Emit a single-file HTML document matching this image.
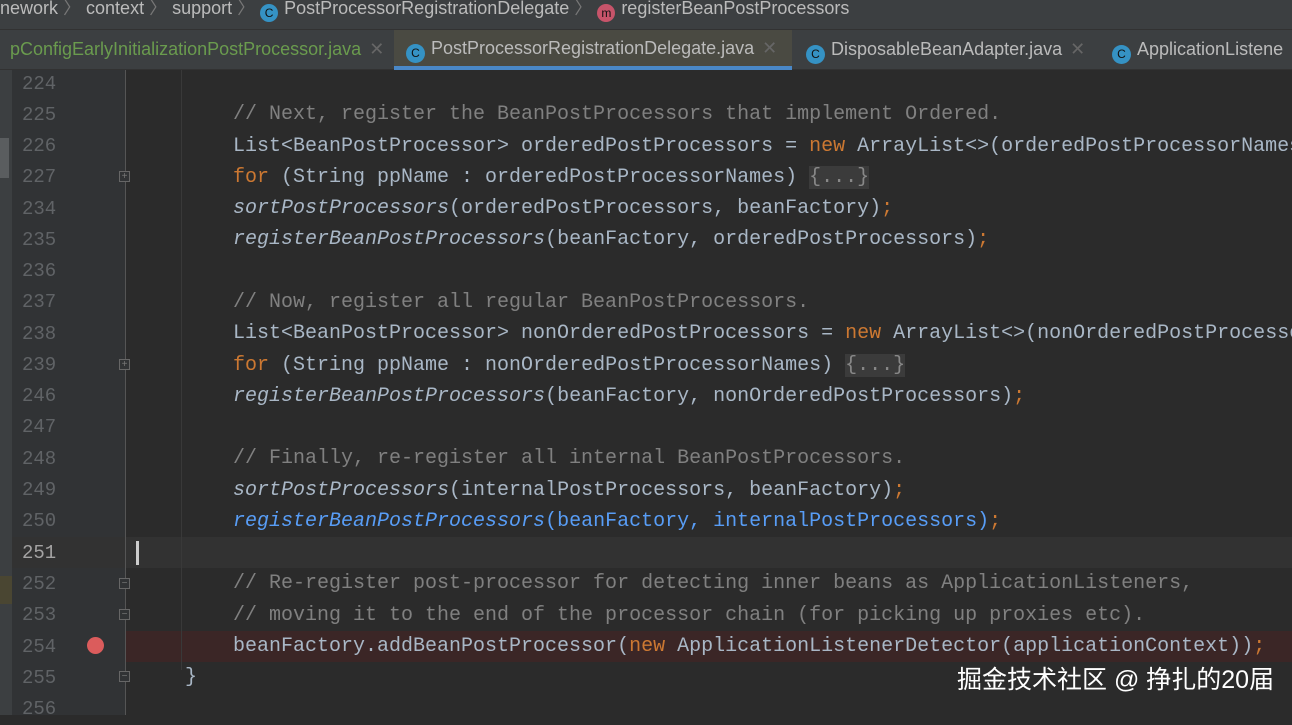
<!DOCTYPE html><html><head><meta charset="utf-8"><style>
body{margin:0;width:1292px;height:715px;overflow:hidden;background:#2b2b2b;font-family:"Liberation Sans",sans-serif;position:relative}
.bc{position:absolute;left:0;top:0;width:1292px;height:29px;background:#3c3f41;color:#bbb;font-size:18px;line-height:16px;white-space:nowrap}
.tabs{position:absolute;left:0;top:29px;width:1292px;height:41px;background:#3c3f41;border-top:1px solid #323232;border-bottom:1px solid #323232;box-sizing:border-box;font-size:18px;white-space:nowrap}
.tab{position:absolute;top:0;height:40px;line-height:38px;color:#bbb}
.ic{display:inline-block;width:19px;height:19px;border-radius:50%;background:#3592c4;color:#111;font-size:12px;line-height:19px;text-align:center;vertical-align:-3px;margin-right:6px}
.x{color:#666;margin-left:8px}
.strip{position:absolute;left:0;top:70px;width:12px;height:645px;background:#3c3f41}
.gut{position:absolute;left:12px;top:70px;width:113px;height:645px;background:#313335}
.fl{position:absolute;left:125px;top:70px;width:1px;height:645px;background:#555}
.ln{position:absolute;left:22px;width:40px;color:#606366;font:19px/31px "Liberation Mono",monospace;margin-top:2px}
.c{position:absolute;left:233px;color:#a9b7c6;font:20px/31px "Liberation Mono",monospace;white-space:pre;margin-top:2px}
.cm{color:#808080}.k{color:#cc7832}.i{font-style:italic}.b{color:#589df6}
.fold{position:absolute;left:119px;width:11px;height:11px;border:1px solid #666;box-sizing:border-box;background:#313335;color:#777;font-size:10px;line-height:9px;text-align:center}
.gd{position:absolute;left:181px;top:70px;width:1px;height:600px;background:#393939}
</style></head><body>
<div class="bc"><div style="position:absolute;top:0;left:0">nework <span style="color:#777">〉</span> context <span style="color:#777">〉</span> support <span style="color:#777">〉</span> <span class="ic" style="width:18px;height:18px">C</span>PostProcessorRegistrationDelegate <span style="color:#777">〉</span> <span class="ic" style="background:#c7546a;width:18px;height:18px">m</span>registerBeanPostProcessors</div></div>
<div class="tabs">
<div class="tab" style="left:0;width:392px;color:#6a9b4e;padding-left:10px;box-sizing:border-box">pConfigEarlyInitializationPostProcessor.java<span class="x">✕</span></div>
<div class="tab" style="left:394px;width:398px;background:#4a4a42;border-bottom:4px solid #4a88c7;box-sizing:border-box;padding-left:12px;line-height:36px"><span class="ic">C</span>PostProcessorRegistrationDelegate.java<span class="x">✕</span></div>
<div class="tab" style="left:806px"><span class="ic">C</span>DisposableBeanAdapter.java<span class="x">✕</span></div>
<div class="tab" style="left:1112px"><span class="ic">C</span>ApplicationListene</div>
</div>
<div class="strip"></div><div style="position:absolute;left:0;top:138px;width:9px;height:40px;background:#5a5d5f"></div>
<div style="position:absolute;left:0;top:576px;width:12px;height:28px;background:#4a4632"></div>
<div class="gut"></div>
<div style="position:absolute;left:12px;top:537px;width:1280px;height:31px;background:#323232"></div>
<div style="position:absolute;left:126px;top:631px;width:1166px;height:31px;background:#3b2626"></div>
<div class="fl"></div><div class="gd"></div>
<div style="position:absolute;left:136px;top:541px;width:3px;height:24px;background:#ccc"></div>
<div style="position:absolute;left:87px;top:637px;width:17px;height:17px;border-radius:50%;background:#db5c5c"></div>
<div class="fold" style="top:171px">+</div><div class="fold" style="top:359px">+</div>
<div class="fold" style="top:578px">−</div><div class="fold" style="top:609px">−</div><div class="fold" style="top:671px">−</div>

<div class="ln" style="top:67px">224</div>
<div class="ln" style="top:98px">225</div><div class="c" style="top:97px"><span class="cm">// Next, register the BeanPostProcessors that implement Ordered.</span></div>
<div class="ln" style="top:129px">226</div><div class="c" style="top:129px">List&lt;BeanPostProcessor&gt; orderedPostProcessors = <span class="k">new</span> ArrayList&lt;&gt;(orderedPostProcessorNames</div>
<div class="ln" style="top:160px">227</div><div class="c" style="top:160px"><span class="k">for</span> (String ppName : orderedPostProcessorNames) <span style="background:#3b3b3b;color:#888">{...}</span></div>
<div class="ln" style="top:192px">234</div><div class="c i" style="top:191px">sortPostProcessors<span style="font-style:normal">(orderedPostProcessors, beanFactory)<span class="k">;</span></span></div>
<div class="ln" style="top:223px">235</div><div class="c i" style="top:222px">registerBeanPostProcessors<span style="font-style:normal">(beanFactory, orderedPostProcessors)<span class="k">;</span></span></div>
<div class="ln" style="top:254px">236</div>
<div class="ln" style="top:285px">237</div><div class="c" style="top:285px"><span class="cm">// Now, register all regular BeanPostProcessors.</span></div>
<div class="ln" style="top:317px">238</div><div class="c" style="top:316px">List&lt;BeanPostProcessor&gt; nonOrderedPostProcessors = <span class="k">new</span> ArrayList&lt;&gt;(nonOrderedPostProcesso</div>
<div class="ln" style="top:348px">239</div><div class="c" style="top:348px"><span class="k">for</span> (String ppName : nonOrderedPostProcessorNames) <span style="background:#3b3b3b;color:#888">{...}</span></div>
<div class="ln" style="top:379px">246</div><div class="c i" style="top:379px">registerBeanPostProcessors<span style="font-style:normal">(beanFactory, nonOrderedPostProcessors)<span class="k">;</span></span></div>
<div class="ln" style="top:410px">247</div>
<div class="ln" style="top:442px">248</div><div class="c" style="top:441px"><span class="cm">// Finally, re-register all internal BeanPostProcessors.</span></div>
<div class="ln" style="top:473px">249</div><div class="c i" style="top:473px">sortPostProcessors<span style="font-style:normal">(internalPostProcessors, beanFactory)<span class="k">;</span></span></div>
<div class="ln" style="top:504px">250</div><div class="c i b" style="top:504px">registerBeanPostProcessors<span style="font-style:normal">(beanFactory, internalPostProcessors)<span class="k">;</span></span></div>
<div class="ln" style="top:536px;color:#a4a3a3">251</div>
<div class="ln" style="top:567px">252</div><div class="c" style="top:566px"><span class="cm">// Re-register post-processor for detecting inner beans as ApplicationListeners,</span></div>
<div class="ln" style="top:598px">253</div><div class="c" style="top:598px"><span class="cm">// moving it to the end of the processor chain (for picking up proxies etc).</span></div>
<div class="ln" style="top:630px">254</div><div class="c" style="top:629px">beanFactory.addBeanPostProcessor(<span class="k">new</span> ApplicationListenerDetector(applicationContext))<span class="k">;</span></div>
<div class="ln" style="top:661px">255</div><div class="c" style="top:660px;left:185px">}</div>
<div class="ln" style="top:692px">256</div>
<div style="position:absolute;left:957px;top:664px;color:#fff;font:25px/32px 'Liberation Sans','Noto Sans CJK SC',sans-serif;white-space:nowrap">掘金技术社区 @ 挣扎的20届</div>
</body></html>
